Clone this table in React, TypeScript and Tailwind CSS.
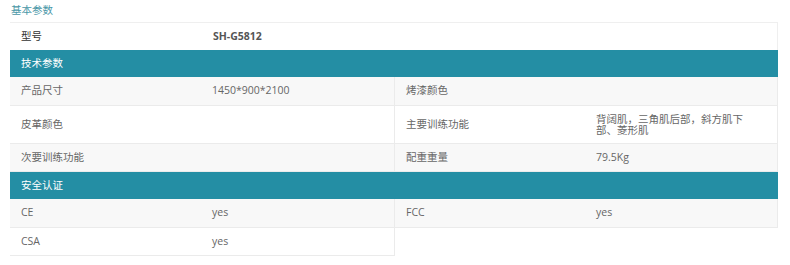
type Cell = { label: string; value?: string };
type Row = { cells: Cell[]; tall?: boolean };
type Section = { title: string; rows: Row[] };

const font = "font-['Open_Sans','Noto_Sans_CJK_SC',sans-serif]";

const sections: Section[] = [
  {
    title: '技术参数',
    rows: [
      { cells: [{ label: '产品尺寸', value: '1450*900*2100' }, { label: '烤漆颜色' }] },
      {
        tall: true,
        cells: [
          { label: '皮革颜色' },
          { label: '主要训练功能', value: '背阔肌，三角肌后部，斜方肌下部、菱形肌' }
        ]
      },
      { cells: [{ label: '次要训练功能' }, { label: '配重重量', value: '79.5Kg' }] }
    ]
  },
  {
    title: '安全认证',
    rows: [
      { cells: [{ label: 'CE', value: 'yes' }, { label: 'FCC', value: 'yes' }] },
      { cells: [{ label: 'CSA', value: 'yes' }] }
    ]
  }
];

function Pair({ cell, right, tall }: { cell: Cell; right?: boolean; tall?: boolean }) {
  return (
    <div
      className={`flex w-1/2 items-center border-b border-[#ebebeb] ${
        right ? 'border-x' : ''
      }`}>
      <div className="w-1/2 pl-[11px] text-[#666]">{cell.label}</div>
      <div className="w-1/2 pl-[10px] text-[#666]">
        {tall ? (
          <div className="w-[152px] leading-[11px]">{cell.value}</div>
        ) : (
          cell.value
        )}
      </div>
    </div>
  );
}

export default function App() {
  return (
    <div className={`h-[265px] w-[790px] bg-white ${font} text-[10.5px]`}>
      {/* Title */}
      <div className="flex h-[22px] items-center pl-[11px] text-[#4a97a7]">
        基本参数
      </div>

      <div className="ml-[10px] w-[768px] border-t border-[#efefef]">
        {/* Model row */}
        <div className="flex h-[27px] items-center border-r border-[#efefef]">
          <div className="w-[192px] pl-[11px] text-[#333]">型号</div>
          <div className="pl-[11px] font-bold text-[#555]">SH-G5812</div>
        </div>

        {sections.map(section => (
          <div key={section.title}>
            <div className="flex h-[27px] items-center bg-[#248ea4] pl-[11px] text-white">
              {section.title}
            </div>
            {section.rows.map((row, i) => (
              <div
                key={i}
                className={`flex ${row.tall ? 'h-[38px]' : i === 0 ? 'h-[29px]' : 'h-[28px]'} ${
                  i % 2 === 0 ? 'bg-[#f8f8f8]' : 'bg-white'
                }`}>
                {row.cells.map((cell, j) => (
                  <Pair
                    key={cell.label}
                    cell={cell}
                    right={j === 1}
                    tall={row.tall && j === 1}
                  />
                ))}
                {row.cells.length === 1 && (
                  <div className="w-1/2 border-l border-[#ebebeb]" />
                )}
              </div>
            ))}
          </div>
        ))}
      </div>
    </div>
  );
}
